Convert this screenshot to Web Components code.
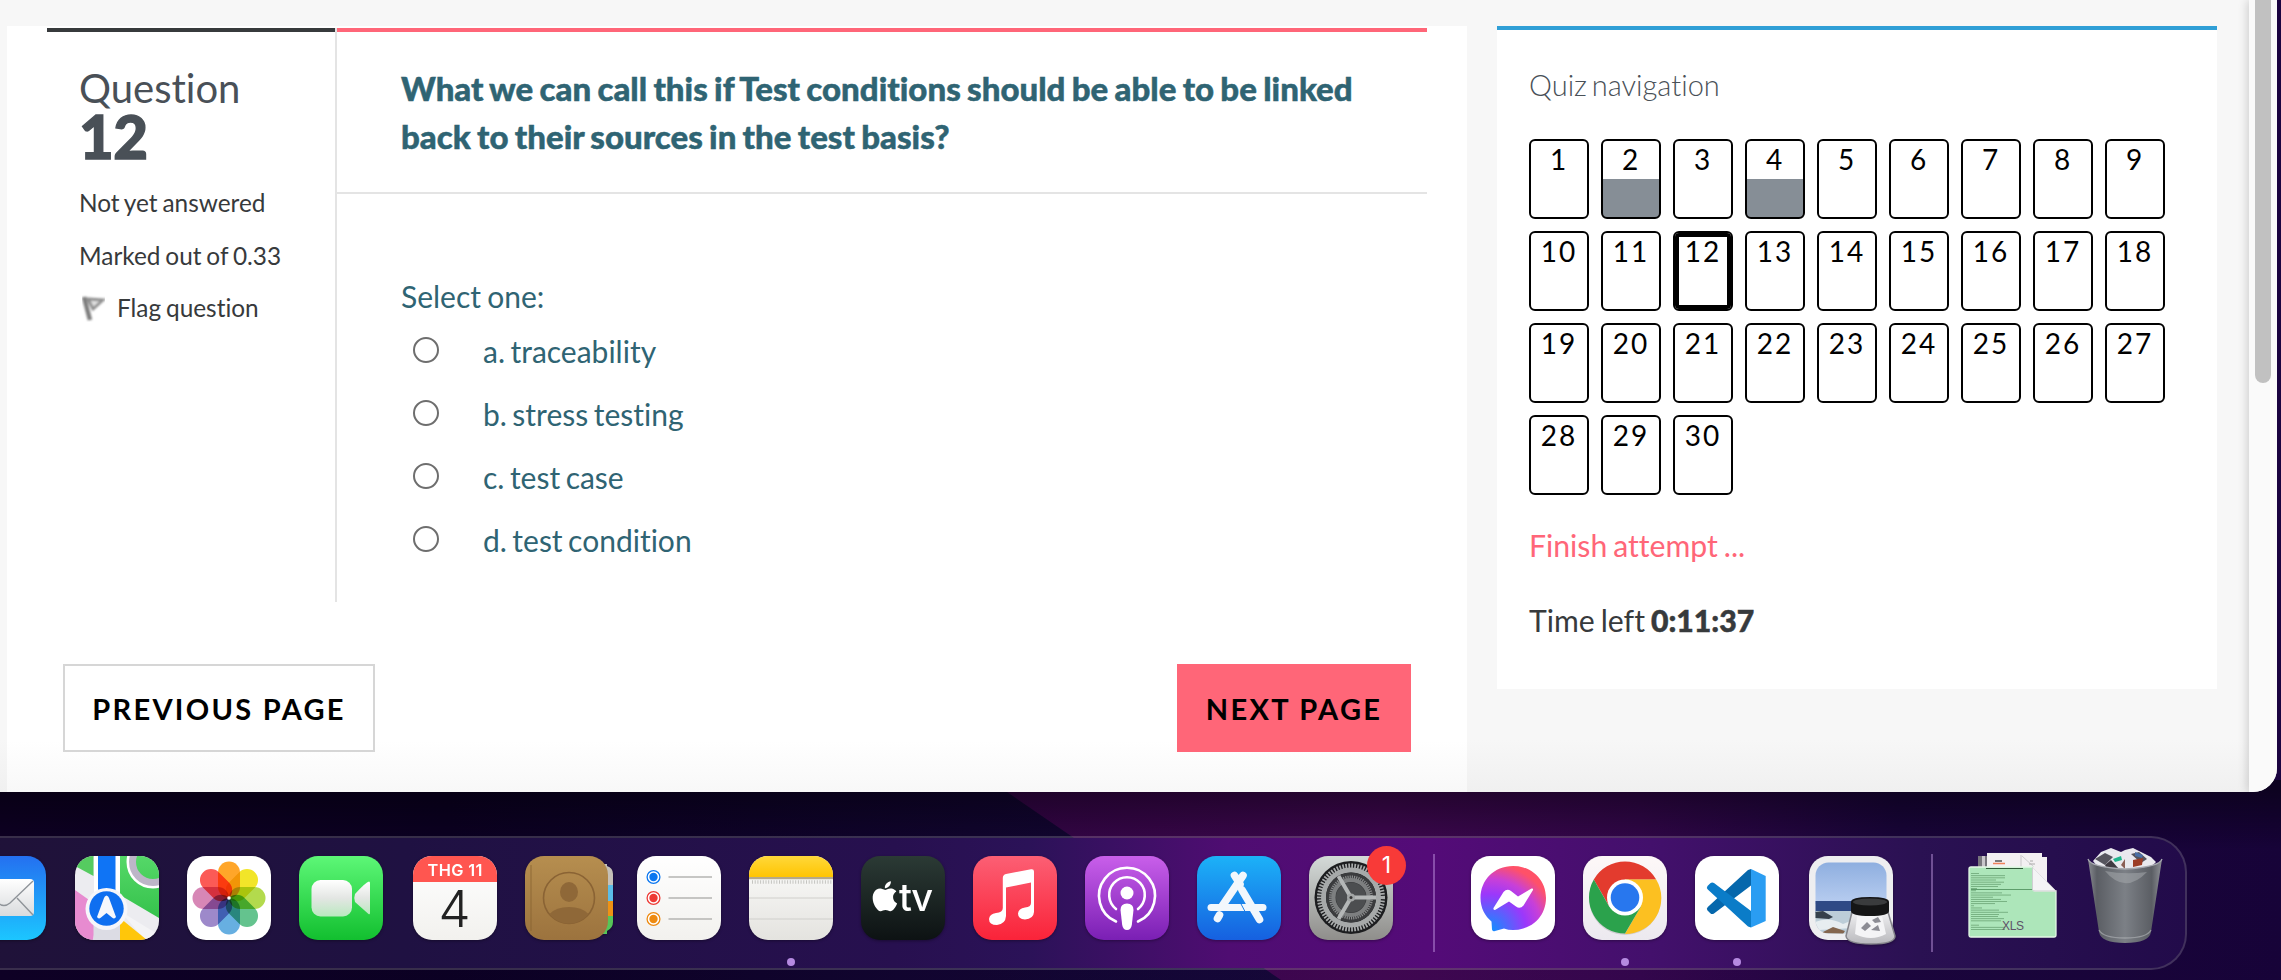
<!DOCTYPE html>
<html lang="en">
<head>
<meta charset="utf-8">
<title>Quiz</title>
<style>
html,body{margin:0;height:100%;overflow:hidden;background:#0b0220}
body{font-family:Lato,"Liberation Sans",sans-serif;font-variant-ligatures:none}
</style>
</head>
<body>
<mac-desktop>
  <browser-window>
    <quiz-card>
      <quiz-info number="12"></quiz-info>
      <quiz-question>
        <span slot="title">What we can call this if Test conditions should be able to be linked back to their sources in the test basis?</span>
        <quiz-option>a. traceability</quiz-option>
        <quiz-option>b. stress testing</quiz-option>
        <quiz-option>c. test case</quiz-option>
        <quiz-option>d. test condition</quiz-option>
      </quiz-question>
      <quiz-button slot="actions">PREVIOUS PAGE</quiz-button>
      <quiz-button slot="actions" primary>NEXT PAGE</quiz-button>
    </quiz-card>
    <quiz-nav count="30" current="12" answered="2,4"></quiz-nav>
  </browser-window>
  <dock-bar></dock-bar>
</mac-desktop>
<script>
function define(name, css, html) {
  customElements.define(name, class extends HTMLElement {
    connectedCallback() {
      if (this.shadowRoot) return;
      const root = this.attachShadow({ mode: 'open' });
      root.innerHTML = '<style>:host,*{box-sizing:border-box}' + css + '</style>' + (typeof html === 'function' ? html(this) : html);
    }
  });
}

define('mac-desktop', `
:host{display:flex;flex-direction:column;align-items:flex-start;width:2281px;height:980px;overflow:hidden;position:relative;background:#120028}
svg.wall{position:absolute;inset:0}
::slotted(*){position:relative;flex:none}
`, `
<svg class="wall" width="2281" height="980" viewBox="0 0 2281 980">
  <defs>
    <linearGradient id="l" x1="0" x2="1280" y1="0" y2="0" gradientUnits="userSpaceOnUse"><stop offset="0" stop-color="#10002a"/><stop offset=".35" stop-color="#0d0028"/><stop offset="1" stop-color="#180840"/></linearGradient>
    <linearGradient id="r" x1="1000" x2="2281" y1="0" y2="0" gradientUnits="userSpaceOnUse"><stop offset="0" stop-color="#3c0552"/><stop offset=".3" stop-color="#48085c"/><stop offset=".5" stop-color="#3a0756"/><stop offset=".7" stop-color="#1d0544"/><stop offset="1" stop-color="#1a0340"/></linearGradient>
    <linearGradient id="s" x1="0" x2="0" y1="790" y2="850" gradientUnits="userSpaceOnUse"><stop offset="0" stop-color="#000" stop-opacity=".5"/><stop offset="1" stop-color="#000" stop-opacity=".12"/></linearGradient>
  </defs>
  <rect width="2281" height="980" fill="url(#l)"/>
  <path d="M1007 792L1281 980H2281V0H1007Z" fill="url(#r)"/>
  <rect y="780" width="2281" height="200" fill="url(#s)"/>
</svg>
<slot></slot>`);

define('browser-window', `
:host{display:flex;width:2277px;height:792px;background:linear-gradient(#f7f7f7 0 740px,#f0f0f0);border-bottom-right-radius:24px;overflow:hidden;position:relative}
.track{margin-left:auto;width:28px;background:#fafafa;box-shadow:-2px 0 10px rgba(0,0,0,.16);display:flex;justify-content:center;align-items:flex-start}
.thumb{width:16px;height:383px;background:#c1c1c1;border-radius:0 0 8px 8px;margin-right:1px}
`, `<slot></slot><div class="track"><div class="thumb"></div></div>`);

define('quiz-card', `
:host{display:block;margin:26px 0 0 7px;width:1460px;height:766px;background:linear-gradient(#fff 0 715px,#f8f8f8);padding:2px 40px 0}
.row{display:flex;height:574px}
.act{display:flex;justify-content:space-between;padding:62px 16px 0}
`, `<div class="row"><slot></slot></div><div class="act"><slot name="actions"></slot></div>`);

define('quiz-info', `
:host{display:block;width:290px;border-right:2px solid #e4e4e4;color:#373a3c;font-size:24.4px;line-height:30px;word-spacing:-1.4px}
.in{border-top:4px solid #373a3c;padding:36px 0 0 32px;white-space:nowrap}
.q{font-size:40px;line-height:40px;color:#495057}
.n{font-size:60px;line-height:56px;font-weight:900;color:#495057;letter-spacing:-.5px;-webkit-text-stroke:1.4px #495057}
p{margin:23px 0 0}
.n+p{margin-top:24px}
.f{margin-top:22px;display:flex;align-items:center;gap:10px}
svg{display:block;margin-left:1px}
`, el => `<div class="in"><div class="q">Question</div><div class="n">${el.getAttribute('number')}</div>
<p>Not yet answered</p><p>Marked out of 0.33</p>
<p class="f"><svg width="27" height="28" viewBox="0 0 27 28"><defs><filter id="b"><feGaussianBlur stdDeviation=".8"/></filter></defs><g filter="url(#b)"><path d="M4 3L10 26" stroke="#7d7d7d" stroke-width="4.500"/><path d="M8 5L23 6L13 15Z" fill="#e0e0e0" stroke="#8c8c8c" stroke-width="2.800"/></g></svg><span>Flag question</span></p></div>`);

define('quiz-question', `
:host{display:block;flex:1;border-top:4px solid #ff6678;color:#2f6473}
.t{padding:32px 0 32px 64px;border-bottom:2px solid #e4e4e4;font-weight:900;font-size:33px;line-height:48px;word-spacing:-1.6px;letter-spacing:.02px;-webkit-text-stroke:.5px #2f6473}
.t ::slotted(*){display:block;width:970px}
.b{padding:82px 0 0 64px;font-size:30px;line-height:40px;word-spacing:-1.5px}
.o{margin-top:3px;display:flex;flex-direction:column}
`, `<div class="t"><slot name="title"></slot></div><div class="b">Select one:<div class="o"><slot></slot></div></div>`);

define('quiz-option', `
:host{display:flex;align-items:center;height:63px;padding-left:12px;gap:44px;word-spacing:-2.2px}
i{width:26px;height:26px;border:2px solid #6e6e6e;border-radius:50%;margin-top:-2px}
`, `<i></i><span><slot></slot></span>`);

define('quiz-button', `
:host{display:flex;align-items:center;justify-content:center;height:88px;width:312px;border:2px solid #d6d6d6;font-weight:700;font-size:29px;letter-spacing:2.3px;color:#000;background:#fff}
:host([primary]){width:234px;background:#ff6678;border-color:#ff6678}
`, `<span><slot></slot></span>`);

define('quiz-nav', `
:host{display:block;margin:26px 0 0 30px;width:720px;height:663px;background:#fff;border-top:4px solid #309fd6;padding:35px 32px 0;color:#373a3c;font-size:30.2px;line-height:40px;word-spacing:-1.8px}
h2{margin:0;font-weight:300;font-size:29px;color:#495057;line-height:40px;word-spacing:-3px}
.g{margin-top:34px;display:grid;grid-template-columns:repeat(9,60px);gap:12px}
.c{height:80px;border:2px solid #000;border-radius:6px;font-size:28px;line-height:36px;letter-spacing:2px;text-align:center;color:#000;overflow:hidden}
.a{background:linear-gradient(#fff 50%,#868e96 50%)}
.k{box-shadow:inset 0 0 0 4px #000}
.f{margin-top:30px;color:#ff6678}.t{margin-top:35px}b{font-weight:900;-webkit-text-stroke:.5px #373a3c}
`, el => {
  const ans = el.getAttribute('answered').split(',').map(Number), cur = +el.getAttribute('current');
  let g = '';
  for (let i = 1; i <= +el.getAttribute('count'); i++) g += `<div class="c ${ans.includes(i) ? 'a' : ''} ${i === cur ? 'k' : ''}">${i}</div>`;
  return `<h2>Quiz navigation</h2><div class="g">${g}</div><div class="f">Finish attempt ...</div><div class="t">Time left <b>0:11:37</b></div>`;
});

const lg = (id, a, b, extra = '') => `<linearGradient id="${id}" x1="0" y1="0" x2="0" y2="1"><stop offset="0" stop-color="${a}"/>${extra}<stop offset="1" stop-color="${b}"/></linearGradient>`;
const tile = fill => `<rect width="84" height="84" rx="19" fill="${fill}"/>`;
const petals = ['#ff9500', '#f0e000', '#a5d32a', '#46b878', '#4aa0dc', '#8a72c0', '#d070a8', '#fb3a35']
  .map((c, i) => `<rect x="31" y="5.500" width="22" height="36.500" rx="11" fill="${c}" opacity=".84" transform="rotate(${i * 45} 42 42)" style="mix-blend-mode:multiply"/>`).join('');
let bits = '';
for (let i = 0; i < 28; i++) bits += `<rect x="2" y="${16 + i * 2.15}" width="${[0, 5, 28, 34, 22, 27, 30, 24][i % 8] + (i % 3) * 3}" height=".8" fill="#3f7a48" opacity=".6"/>`;

const ICONS = {
mail: `<defs>${lg('g', '#2470f0', '#1cc6ff')}${lg('w', '#fff', '#d9dbdd')}</defs>${tile('url(#g)')}<rect x="11" y="23" width="61" height="37" rx="4" fill="url(#w)"/><path d="M12 25L36 47Q42 52 48 47L71 25M55 42L71 59M29 42L12 59" fill="none" stroke="#8f9499" stroke-width="1.400"/>`,
maps: `<defs><clipPath id="c">${tile('#fff')}</clipPath>${lg('g', '#55d868', '#35c24c')}</defs><g clip-path="url(#c)"><rect width="84" height="84" fill="#ececf0"/><path d="M0 0H18.500V20L0 10Z" fill="#55cb60"/><path d="M45 0H84V62L45 39Z" fill="url(#g)"/><circle cx="78" cy="6" r="23" fill="none" stroke="#fff" stroke-width="7"/><circle cx="78" cy="6" r="20.500" fill="none" stroke="#bdb6c8" stroke-width="7"/><path d="M0 34L24 51L18 84H0Z" fill="#e78bd0"/><path d="M45 55L84 79V84H70Z" fill="#f4f4f6"/><path d="M45 62L72 84H45Z" fill="#ffc60a"/><path d="M18.500 66H45V84H18.500Z" fill="#dcdce4"/><rect x="19" width="26" height="40" fill="#fff"/><rect x="23" width="17.500" height="40" fill="#0f74f5"/></g><circle cx="31.500" cy="53" r="21" fill="#f6f6fa"/><circle cx="31.500" cy="52.500" r="17.200" fill="#0f6ff0"/><path d="M31.500 39.500Q33.500 40 34 42L41 61Q39.500 63.500 37 61.500L31.500 57L26 61.500Q23.500 63.500 22 61L29 42Q29.500 40 31.500 39.500Z" fill="#f6f8fc"/>`,
photos: `${tile('#fff')}<g style="isolation:isolate">${petals}</g><circle cx="42" cy="42" r="1.800" fill="#fff"/>`,
facetime: `<defs>${lg('g', '#5df777', '#12bf2f')}${lg('w', '#fff', '#b9e9bf', '<stop offset=".5" stop-color="#e3e6e3"/>')}</defs>${tile('url(#g)')}<rect x="12.500" y="24" width="40.500" height="36.500" rx="9" fill="url(#w)"/><path d="M56 38Q67 26 70 25.500Q71 25.500 71 27V57Q71 59 69.500 58L56 46Q54.500 42 56 38Z" fill="url(#w)"/>`,
calendar: `<defs><clipPath id="c">${tile('#fff')}</clipPath>${lg('w', '#fff', '#f2f1ee')}</defs><g clip-path="url(#c)"><rect width="84" height="84" fill="url(#w)"/><rect width="84" height="26" fill="#ff5650"/></g><text x="42" y="19.800" text-anchor="middle" font-family="Inter,sans-serif" font-weight="600" font-size="16.300" fill="#fff" textLength="55">THG 11</text><text x="41.500" y="70.500" text-anchor="middle" font-family="Inter,sans-serif" font-weight="300" font-size="51" fill="#222">4</text>`,
contacts: `<defs>${lg('g', '#b68e4f', '#9c733e')}<clipPath id="c"><path d="M0 0H82V10Q88 12 88 18V66Q88 72 82 75V84H0Z"/></clipPath></defs><g clip-path="url(#c)"><rect x="60" y="8" width="28" height="22" fill="#c5c0b8"/><rect x="60" y="29" width="28" height="17" fill="#5bbde8"/><rect x="60" y="45" width="28" height="16" fill="#ef9214"/><rect x="60" y="60" width="28" height="18" fill="#56c558"/></g><rect width="83" height="84" rx="19" fill="url(#g)"/><path d="M6 9V75" stroke="#85602f" opacity=".5" stroke-width="1.500"/><circle cx="44" cy="42" r="25.500" fill="none" stroke="#8a6334" stroke-width="1.600"/><ellipse cx="44" cy="36" rx="9" ry="10" fill="#8f6838"/><path d="M24.500 58Q31 51 44 51T63.500 58Q56 67.500 44 67.500T24.500 58Z" fill="#8f6838"/>`,
reminders: `<defs>${lg('w', '#fff', '#f2f1ee')}</defs>${tile('url(#w)')}${[['#0a76f0', 21], ['#ee3a35', 42], ['#ee8a10', 63]].map(([c, y]) => `<circle cx="16.500" cy="${y}" r="6.400" fill="#fff" stroke="${c}" stroke-width="1.300"/><circle cx="16.500" cy="${y}" r="4.200" fill="${c}"/><path d="M31.500 ${y}H75" stroke="#b4b4b2" stroke-width="1.300"/>`).join('')}`,
notes: `<defs><clipPath id="c">${tile('#fff')}</clipPath>${lg('g', '#ffd83a', '#ffc400')}${lg('w', '#fcfcfb', '#e4e3df')}</defs><g clip-path="url(#c)"><rect width="84" height="84" fill="url(#w)"/><rect width="84" height="21.500" fill="url(#g)"/><rect y="21" width="84" height="2.200" fill="#b5a988"/><path d="M3 26H84" stroke="#c4c4c0" stroke-width="3.500" stroke-dasharray="1 1.700"/><path d="M0 42H84M0 63H84" stroke="#cfcfcb" stroke-width="1.200"/></g>`,
tv: `<defs>${lg('g', '#2b3a35', '#0d1213')}</defs>${tile('url(#g)')}<path transform="translate(8.900 25.300) scale(1.250)" fill="#fff" d="M12.152 6.896c-.948 0-2.415-1.078-3.960-1.040-2.040.027-3.910 1.183-4.961 3.014-2.117 3.675-.546 9.103 1.519 12.090 1.013 1.454 2.208 3.090 3.792 3.039 1.520-.065 2.090-.987 3.935-.987 1.831 0 2.350.987 3.960.948 1.637-.026 2.676-1.480 3.676-2.948 1.156-1.688 1.636-3.325 1.662-3.415-.039-.013-3.182-1.221-3.220-4.857-.026-3.040 2.480-4.494 2.597-4.559-1.429-2.090-3.623-2.324-4.390-2.376-2-.156-3.675 1.090-4.610 1.090zM15.530 3.830c.843-1.012 1.400-2.427 1.245-3.830-1.207.052-2.662.805-3.532 1.818-.780.896-1.454 2.338-1.273 3.714 1.338.104 2.715-.688 3.559-1.701"/><text x="38" y="54.500" font-family="Inter,sans-serif" font-weight="500" font-size="38" fill="#fff" textLength="34">tv</text>`,
music: `<defs>${lg('g', '#fc5f74', '#fa2339')}</defs>${tile('url(#g)')}<path fill="#fff" d="M29.800 22Q29.800 18.800 33 18L58 13.300Q61 12.800 61 15.500V56Q60.500 63 52 63.500Q45 63 45 57.500Q45.500 52.500 52 51.500Q58 51 58 47V26.500L33 31.500V60Q32.500 68 24 69Q16 69 16 63Q16.500 58 23 57Q29.800 56.500 29.800 52Z"/>`,
podcasts: `<defs>${lg('g', '#c95fea', '#7a1fb4')}</defs>${tile('url(#g)')}<g fill="none" stroke="#fff" stroke-linecap="round"><path stroke-width="2.600" d="M31 65.500A28 28 0 1 1 53 65.500"/><path stroke-width="2.600" d="M31 53A17.800 17.800 0 1 1 53 53"/></g><circle cx="42" cy="37" r="6.500" fill="#fff"/><path d="M35.500 54Q35.500 47.500 42 47.500T48.500 54L46.800 69Q46 74 42 74T37.200 69Z" fill="#fff"/>`,
appstore: `<defs>${lg('g', '#1cb2f8', '#1660e0')}</defs>${tile('url(#g)')}<g stroke="#f2f7fc" stroke-width="7.600" stroke-linecap="round"><path d="M46 19.500L24.500 51M37.500 19.500L43 28M20.500 62.500L22.500 59M45 34L62.500 63.500"/><path d="M14 51.500H66" stroke-width="7"/></g><path d="M43 46L48 55.500" stroke="#1c7fe8" stroke-width="1"/>`,
settings: `<defs>${lg('g', '#d4dad8', '#8f8e8b')}</defs>${tile('url(#g)')}<circle cx="42" cy="41.500" r="36.500" fill="#1c1d1f"/><circle cx="42" cy="41.500" r="31.500" fill="none" stroke="#a8abab" stroke-width="5" stroke-dasharray="1.700 1.270"/><circle cx="42" cy="41.500" r="27.500" fill="none" stroke="#a6a9a9" stroke-width="5"/><circle cx="42" cy="41.500" r="25" fill="#3a3b3d"/><circle cx="42" cy="41.500" r="20.500" fill="none" stroke="#8a8c8d" stroke-width="3" stroke-dasharray="1.200 1"/><circle cx="42" cy="41.500" r="17.500" fill="none" stroke="#7d7f80" stroke-width="4"/><circle cx="42" cy="41.500" r="15" fill="#4c4e50"/><path d="M42 41.500H67M42 41.500L29.500 20M42 41.500L29.500 63" stroke="#b4b7b7" stroke-width="4"/><circle cx="42" cy="41.500" r="4" fill="#a2a5a5"/><circle cx="42" cy="41.500" r="1.500" fill="#333"/>`,
messenger: `<defs><radialGradient id="g" gradientUnits="userSpaceOnUse" cx="18" cy="76" r="76"><stop offset="0" stop-color="#0695ff"/><stop offset=".5" stop-color="#9b38fb"/><stop offset=".7" stop-color="#c840d8"/><stop offset=".9" stop-color="#ff5168"/></radialGradient></defs>${tile('#fff')}<path fill="url(#g)" d="M42 10C23 10 9.500 24 9.500 42C9.500 52 14 60 20.500 65.500L21 73.500Q21.500 76 24 75L33 72.500Q37 74 42 74C61 74 75 60 75 42S61 10 42 10Z"/><path fill="#fff" d="M22.500 52L32.500 36Q36 32 40 35L47 40.500L60.500 32.500Q62.500 32 62 34L52.500 49.500Q49 53.500 45 50.500L38 45.500L24 54Q22 54 22.500 52Z"/>`,
chrome: `<defs>${lg('w', '#fdf8f8', '#ece9ef')}</defs>${tile('url(#w)')}<circle cx="42" cy="43" r="36" fill="#000" opacity=".12"/><path fill="#e33b2e" d="M10.800 23.500A36 36 0 0 1 73.200 23.500H42L26.400 50.500Z"/><path fill="#fcc021" d="M73.200 23.500A36 36 0 0 1 42 78L57.600 51L42 23.500Z"/><path fill="#2ba24c" d="M42 77.500A36 36 0 0 1 10.800 23.500L26.400 51L57.600 51Z"/><circle cx="42" cy="41.500" r="18" fill="#fff"/><circle cx="42" cy="41.500" r="14.300" fill="#2877ee"/>`,
vscode: `${tile('#fff')}<path d="M56 13L70.700 20V65L56 71.500Z" fill="#2a9df2"/><path d="M56 13V29.500L19 57.500Q17 58.800 15.300 57.200L12.500 54.500Q11 52.500 12.800 51L53 14Z" fill="#0567ac"/><path d="M56 71.500V55L19 27Q17 25.700 15.300 27.300L12.500 30Q11 32 12.800 33.500L53 70.500Z" fill="#0a7cc8"/>`,
preview: `<defs><clipPath id="c"><rect x="6.500" y="6.500" width="71" height="71" rx="13"/></clipPath>${lg('g', '#88aadd', '#b8cdf0')}${lg('j', '#f0f0f2', '#b9b9bd')}</defs>${tile('#eeeef0')}<g clip-path="url(#c)"><rect width="84" height="48" fill="url(#g)"/><rect y="45" width="84" height="12" fill="#2f4a85"/><rect y="55" width="84" height="30" fill="#bccdd8"/><path d="M6 56L14 55L24 61L20 63L6 62Z" fill="#35404c"/><path d="M6 66Q20 60 34 68L44 64V72L10 74Z" fill="#e7edf0"/><path d="M12 77L24 71L36 75L34 78Z" fill="#84664e"/></g><path d="M43 56H79L86 80Q86 88 62 88T37 80Z" fill="url(#j)" stroke="#85858b" stroke-width="1.500"/><path d="M48 60H73L77 78Q62 86 46 78Z" fill="#f4f4f6"/><path d="M52 72L58 66L62 70L56 75ZM63 64L69 61L72 66L66 67ZM62 74L69 69L71 75Z" fill="#8c8c94"/><path d="M42 46Q42 41 61 41T80 46V55Q80 60 61 60T42 55Z" fill="#151516"/><ellipse cx="61" cy="46" rx="17" ry="3.500" fill="#3a3b3d"/>`
};

const wrap = (k) => `<svg width="84" height="84" viewBox="0 0 84 84" overflow="visible">${ICONS[k]}</svg>`;
define('dock-icon', `
:host{display:block;position:relative;width:84px;height:84px;flex:none}
svg{display:block;filter:drop-shadow(0 1px 1.500px rgba(0,0,0,.35))}
.dot{position:absolute;left:38px;top:102px;width:8px;height:8px;border-radius:50%;background:#b58ae0}
.badge{position:absolute;left:58px;top:-10px;width:39px;height:39px;border-radius:50%;background:#f83a38;color:#fff;font:400 23px/39px Inter,sans-serif;text-align:center}
`, el => wrap(el.getAttribute('name')) + (el.hasAttribute('running') ? '<div class="dot"></div>' : '') + (el.hasAttribute('badge') ? `<div class="badge">${el.getAttribute('badge')}</div>` : ''));

define('dock-folder', `:host{display:block;width:88px;height:84px;flex:none}svg{display:block}`, `
<svg width="88" height="84" viewBox="0 0 88 84" overflow="visible"><path d="M9 1H73V6H78V30H9Z" fill="#77757c"/><path d="M13 1H16V20H13Z" fill="#c9c6cb"/><path d="M18 -2H73V2H78V40H18Z" fill="#f3f0f2"/><path d="M52 0V20" stroke="#c9c6c8"/><path d="M53 1L65 12" stroke="#ccc"/><path d="M26 6H33" stroke="#555" stroke-width="1.500"/><path d="M24 8.500H36" stroke="#ee825a" stroke-width="1.500"/><path d="M61 6H64M60 9H66" stroke="#aaa"/>
<path d="M2 12H64V34Q64 36 66 36H87V80Q87 82 85 82H2Q0 82 0 80V14Q0 12 2 12Z" fill="#ade6ba" stroke="#e4f7e6" stroke-width="1.300"/>${bits}<path d="M17 13.500H54" stroke="#2f5b38"/><path d="M2 34.500H64" stroke="#4a8c58" stroke-width=".8"/>
<path d="M63.500 12V34.500Q64 36 66 36H87Z" fill="#f4f4f5" stroke="#cfcfd2"/><path d="M63.500 12L78 27V10Z" fill="#f3f0f2"/>
<text x="44" y="74.500" text-anchor="middle" font-family="Liberation Sans,Arial,sans-serif" font-size="12" textLength="22" fill="#5e5268">XLS</text></svg>`);

define('dock-trash', `:host{display:block;width:76px;height:98px;flex:none}svg{display:block}`, `
<svg width="76" height="98" viewBox="0 0 76 98"><defs><linearGradient id="t"><stop offset="0" stop-color="#8a8c92"/><stop offset=".12" stop-color="#5b5e64"/><stop offset=".5" stop-color="#7c8086"/><stop offset=".86" stop-color="#5b5e64"/><stop offset="1" stop-color="#8f9197"/></linearGradient></defs>
<path d="M6 14L14 5L24 1L34 5L38 3L46 1L58 7L64 10L69 15L60 24H14Z" fill="#e9e9ee"/><path d="M8 12L18 6L26 10L18 18ZM44 7L52 5L60 12L54 16Z" fill="#56555e"/><path d="M26 12L34 9L35 13L28 15Z" fill="#22b58d"/><path d="M46 13L56 11L55 18L46 20Z" fill="#9c3d26"/><path d="M48 5L56 8L55 11L48 9Z" fill="#4a6fa5"/><path d="M18 18L24 13L32 22H20Z" fill="#3f3a42"/><path d="M34 18L38 12L38 22Z" fill="#8a5f55"/>
<path d="M1 12Q3 20 38 22Q73 20 75 12L64 85Q62 96 38 96T12 85Z" fill="url(#t)"/><path d="M1 12Q3 20 38 22Q73 20 75 12" fill="none" stroke="#a7a9b0" stroke-width="1.300"/><path d="M18 24Q38 48 60 25Q38 28 18 24Z" fill="#a4a7ac" opacity=".55"/><path d="M12 83Q16 91 38 91T64 83" fill="none" stroke="#a9acb1" stroke-width="1.300" opacity=".7"/></svg>`);

define('dock-bar', `
:host{display:flex;align-items:flex-start;gap:28px;margin:44px 0 0 -40px;width:2227px;height:134px;padding:18px 0 0 2px;border:2px solid rgba(255,255,255,.18);border-left:0;border-radius:0 36px 36px 0;background:linear-gradient(90deg,#1f1238 0,#1f1142 20%,#27104f 42%,#2b1258 48%,#4f0d72 57%,#540b78 66%,#43106c 76%,#2a1152 88%,#220b4a 100%);background-clip:padding-box}
i{width:2px;height:98px;margin-top:-2px;background:rgba(210,170,240,.42);flex:none}
`, `
<dock-icon name="mail"></dock-icon><dock-icon name="maps" style="margin-left:1px"></dock-icon><dock-icon name="photos"></dock-icon><dock-icon name="facetime"></dock-icon>
<dock-icon name="calendar" style="margin-left:2px"></dock-icon><dock-icon name="contacts"></dock-icon><dock-icon name="reminders"></dock-icon><dock-icon name="notes" running></dock-icon>
<dock-icon name="tv"></dock-icon><dock-icon name="music"></dock-icon><dock-icon name="podcasts"></dock-icon><dock-icon name="appstore"></dock-icon><dock-icon name="settings" badge="1"></dock-icon>
<i style="margin-left:12px"></i><dock-icon name="messenger" style="margin-left:8px"></dock-icon><dock-icon name="chrome" running></dock-icon><dock-icon name="vscode" running></dock-icon>
<dock-icon name="preview" style="margin-left:2px"></dock-icon><i style="margin-left:10px"></i><dock-folder style="margin:-1px 0 0 8px"></dock-folder><dock-trash style="margin:-9px 0 0 2px"></dock-trash>`);
</script>
</body>
</html>
